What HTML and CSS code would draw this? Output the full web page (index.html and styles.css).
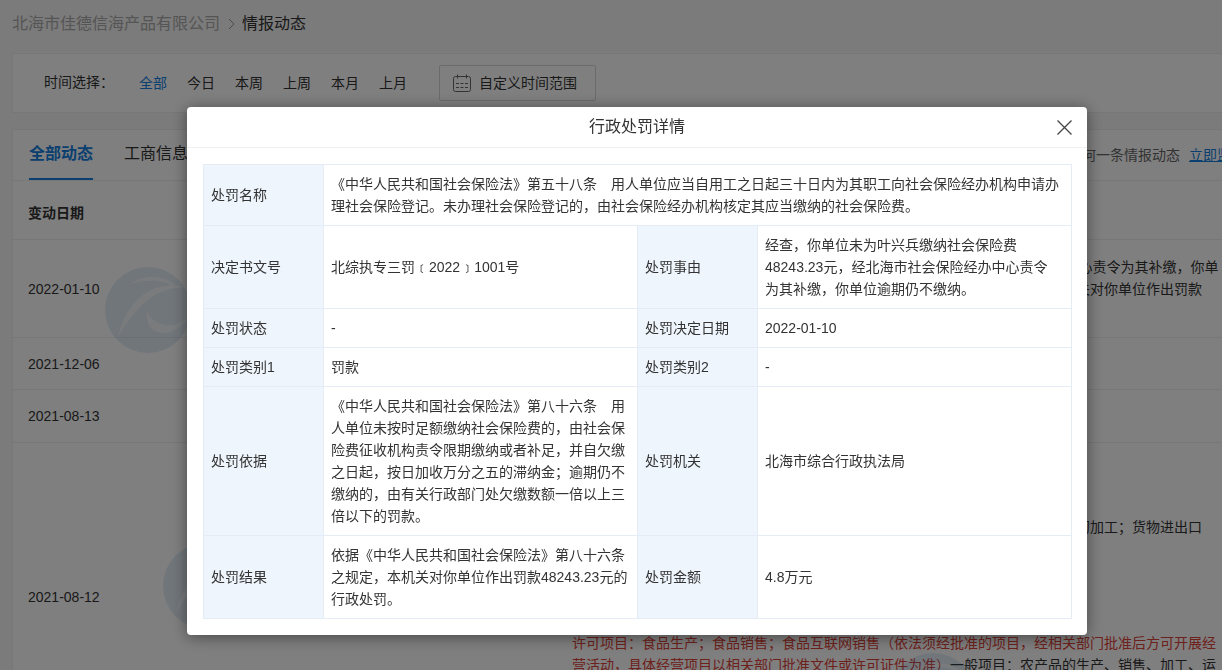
FILE: index.html
```html
<!DOCTYPE html>
<html lang="zh-CN">
<head>
    <meta charset="UTF-8">
    <meta name="viewport" content="width=device-width, initial-scale=1.0">
    <title>情报动态</title>
    <link rel="stylesheet" href="styles.css">
</head>
<body>
    <div class="page">
        <div class="crumbs">
            <span class="crumb-company">北海市佳德信海产品有限公司</span>
            <svg class="crumb-arrow" width="7" height="12" viewBox="0 0 7 12"><path d="M1 1l5 5-5 5" fill="none" stroke="#999" stroke-width="1"/></svg>
            <span class="crumb-current">情报动态</span>
        </div>

        <div class="filter">
            <span class="filter-label">时间选择：</span>
            <div class="filter-options">
                <a class="filter-option active">全部</a>
                <a class="filter-option">今日</a>
                <a class="filter-option">本周</a>
                <a class="filter-option">上周</a>
                <a class="filter-option">本月</a>
                <a class="filter-option">上月</a>
            </div>
            <div class="range-btn">
                <svg width="18" height="18" viewBox="0 0 18 18" fill="none" stroke="#666" stroke-width="1">
                    <rect x="0.5" y="2.5" width="17" height="15" rx="2"/>
                    <path d="M4.5 0.5v4M13.5 0.5v4M3 9.5h3M7.5 9.5h3M12 9.5h3M3 13.5h3M7.5 13.5h3M12 13.5h3"/>
                </svg>
                <span>自定义时间范围</span>
            </div>
        </div>

        <div class="feed">
            <div class="tabs">
                <a class="tab active">全部动态</a>
                <a class="tab">工商信息</a>
                <div class="tabs-notice">开通监控后，您将不会错过任何一条情报动态<a class="notice-link">立即监控</a></div>
            </div>
            <div class="feed-table">
                <div class="feed-head">变动日期</div>
                <div class="feed-row feed-row-1">
                    <div class="feed-date">2022-01-10</div>
                    <div class="feed-text">经查明，你单位未为叶兴兵缴纳社会保险费48243.23元，经北海市社会保险经办中心责令为其补缴，你单<br>位逾期仍不缴纳。现根据《中华人民共和国社会保险法》第八十六条之规定，本机关对你单位作出罚款<br>48243.23元的行政处罚。</div>
                    <svg class="mark mark-1" viewBox="0 0 86 86"><use href="#mark-shape"/></svg>
                </div>
                <div class="feed-row feed-row-2">
                    <div class="feed-date">2021-12-06</div>
                </div>
                <div class="feed-row feed-row-3">
                    <div class="feed-date">2021-08-13</div>
                </div>
                <div class="feed-row feed-row-4">
                    <div class="feed-date">2021-08-12</div>
                    <div class="feed-text scope">
                        <p>经营范围变更前：<br>水产品收购；水产品批发；水产品零售<br>以下项目不含许可经营内容：<br>一般项目：水产品收购；水产品批发；水产品零售；农副产品销售；食用农林产品初加工；货物进出口</p>
                        <p class="scope-new"><span class="scope-red">许可项目：食品生产；食品销售；食品互联网销售（依法须经批准的项目，经相关部门批准后方可开展经<br>营活动，具体经营项目以相关部门批准文件或许可证件为准）</span>一般项目：农产品的生产、销售、加工、运</p>
                    </div>
                    <svg class="mark mark-2" viewBox="0 0 86 86"><use href="#mark-shape"/></svg>
                    <svg class="mark mark-3" viewBox="0 0 86 86"><use href="#mark-shape"/></svg>
                </div>
            </div>
        </div>
    </div>

    <svg class="mark-defs" width="0" height="0">
        <defs>
            <g id="mark-shape">
                <circle cx="43" cy="43" r="43" fill="#1f6fb8"/>
                <path d="M25 17C38 8 60 6 74 22C60 12 40 12 25 17Z" fill="#a5c5e3"/>
                <path d="M13 70C18 48 30 30 48 22C58 18 70 17 82 20C68 20 56 24 46 30C34 40 22 54 13 70Z" fill="#a5c5e3"/>
                <path d="M42 43C40 56 46 66 58 66C68 66 76 60 84 50C76 56 68 60 60 58C50 56 44 50 42 43Z" fill="#a5c5e3"/>
            </g>
        </defs>
    </svg>

    <div class="mask">
        <div class="dialog">
            <div class="dialog-head">
                <span class="dialog-title">行政处罚详情</span>
                <svg class="dialog-close" width="15" height="15" viewBox="0 0 15 15"><path d="M0.5 0.5l14 14M14.5 0.5l-14 14" fill="none" stroke="#444" stroke-width="1.3"/></svg>
            </div>
            <div class="dialog-body">
                <table class="detail">
                    <colgroup>
                        <col class="col-label">
                        <col class="col-value">
                        <col class="col-label">
                        <col class="col-value">
                    </colgroup>
                    <tr>
                        <th>处罚名称</th>
                        <td colspan="3">《中华人民共和国社会保险法》第五十八条　用人单位应当自用工之日起三十日内为其职工向社会保险经办机构申请办理社会保险登记。未办理社会保险登记的，由社会保险经办机构核定其应当缴纳的社会保险费。</td>
                    </tr>
                    <tr>
                        <th>决定书文号</th>
                        <td>北综执专三罚﹝2022﹞1001号</td>
                        <th>处罚事由</th>
                        <td class="cell-narrow">经查，你单位未为叶兴兵缴纳社会保险费48243.23元，经北海市社会保险经办中心责令为其补缴，你单位逾期仍不缴纳。</td>
                    </tr>
                    <tr>
                        <th>处罚状态</th>
                        <td>-</td>
                        <th>处罚决定日期</th>
                        <td>2022-01-10</td>
                    </tr>
                    <tr>
                        <th>处罚类别1</th>
                        <td>罚款</td>
                        <th>处罚类别2</th>
                        <td>-</td>
                    </tr>
                    <tr>
                        <th>处罚依据</th>
                        <td>《中华人民共和国社会保险法》第八十六条　用人单位未按时足额缴纳社会保险费的，由社会保险费征收机构责令限期缴纳或者补足，并自欠缴之日起，按日加收万分之五的滞纳金；逾期仍不缴纳的，由有关行政部门处欠缴数额一倍以上三倍以下的罚款。</td>
                        <th>处罚机关</th>
                        <td>北海市综合行政执法局</td>
                    </tr>
                    <tr>
                        <th>处罚结果</th>
                        <td>依据《中华人民共和国社会保险法》第八十六条之规定，本机关对你单位作出罚款48243.23元的行政处罚。</td>
                        <th>处罚金额</th>
                        <td>4.8万元</td>
                    </tr>
                </table>
            </div>
        </div>
    </div>
</body>
</html>
```

FILE: styles.css
```css
:root {
    --blue: #1480e0;
    --line: #eee;
    --cell-line: #e4edf5;
}

html, body {
    height: 100%;
    overflow: hidden;
}

body {
    margin: 0;
    background-color: #f6f6f6;
    font-family: "Liberation Sans", "Noto Sans CJK SC", sans-serif;
    font-size: 14px;
    line-height: 22px;
    color: #333;
}

.page {
    width: 1246px;
    padding: 0 12px;
}

.crumbs {
    height: 53px;
    padding-bottom: 6px;
    box-sizing: border-box;
    display: flex;
    align-items: center;
    font-size: 16px;
}

.crumb-company {
    color: #aaa;
}

.crumb-arrow {
    margin: 0 7px 0 8px;
}

.filter {
    height: 60px;
    box-sizing: border-box;
    display: flex;
    align-items: center;
    padding-left: 31px;
    background: #fff;
    border: 1px solid var(--line);
    margin-bottom: 16px;
}

.filter-label {
    width: 95px;
    margin-top: -2px;
}

.filter-options {
    display: flex;
    gap: 20px;
}

.filter-option.active {
    color: var(--blue);
}

.range-btn {
    display: flex;
    align-items: center;
    gap: 8px;
    height: 36px;
    box-sizing: border-box;
    margin-left: 32px;
    padding: 0 18px 0 13px;
    border: 1px solid #d6d6d6;
    border-radius: 2px;
}

.feed {
    position: relative;
    background: #fff;
    border: 1px solid var(--line);
    border-bottom: 0;
}

.tabs {
    height: 50px;
    display: flex;
    align-items: flex-start;
    gap: 31px;
    padding: 0 12px 0 16px;
    border-bottom: 1px solid var(--line);
}

.tab {
    font-size: 16px;
    line-height: 48px;
    height: 48px;
}

.tab.active {
    color: var(--blue);
    font-weight: bold;
    border-bottom: 2px solid var(--blue);
}

.tabs-notice {
    margin-left: auto;
    line-height: 51px;
    color: #666;
}

.notice-link {
    margin-left: 9px;
    color: var(--blue);
    text-decoration: underline;
}

.feed-head {
    height: 58px;
    padding-left: 15px;
    line-height: 64px;
    font-weight: bold;
    border-bottom: 1px solid var(--line);
}

.feed-row {
    position: relative;
    display: grid;
    grid-template-columns: 559px 1fr;
    align-items: center;
    padding-left: 15px;
    box-sizing: border-box;
    border-bottom: 1px solid var(--line);
}

.feed-date {
    grid-column: 1;
}

.feed-text {
    grid-column: 2;
    margin-left: -15px;
    white-space: nowrap;
}

.feed-row-1 { height: 98px; }
.feed-row-2 { height: 52px; }
.feed-row-3 { height: 53px; }
.feed-row-4 { height: 308px; }

.scope {
    align-self: start;
    padding-top: 7px;
}

.scope p {
    margin: 0;
}

.scope .scope-new {
    margin-top: 94px;
}

.scope-red {
    color: #dc4238;
}

.mark {
    position: absolute;
    width: 86px;
    height: 86px;
    opacity: 0.12;
    pointer-events: none;
}

.mark-1 { left: 92px; top: 27px; }
.mark-2 { left: 150px; top: 100px; }
.mark-3 { left: 877px; top: 210px; }

.mark-defs {
    position: absolute;
}

.mask {
    position: fixed;
    top: 0;
    right: 0;
    bottom: 0;
    left: 0;
    padding: 107px 0 0 187px;
    background: rgba(0, 0, 0, 0.5);
}

.dialog {
    width: 900px;
    background: #fff;
    border-radius: 4px;
    box-shadow: 0 2px 16px rgba(0, 0, 0, 0.45);
}

.dialog-head {
    position: relative;
    height: 40px;
    border-bottom: 1px solid #f0f0f0;
    text-align: center;
    line-height: 39px;
}

.dialog-title {
    font-size: 16px;
}

.dialog-close {
    position: absolute;
    right: 15px;
    top: 13px;
}

.dialog-body {
    padding: 16px;
}

.detail {
    width: 867px;
    table-layout: fixed;
    border-collapse: collapse;
}

.col-label {
    width: 120px;
}

.col-value {
    width: 314px;
}

.detail th,
.detail td {
    padding: 8px 8px 8px 7px;
    border: 1px solid var(--cell-line);
    font-weight: normal;
    text-align: left;
}

.detail th {
    background-color: #eef5fc;
}

.detail .cell-narrow {
    padding-right: 12px;
}
```
